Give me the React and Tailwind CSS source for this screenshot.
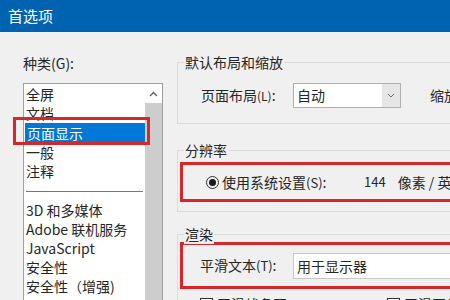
import React from "react";

const items = ["全屏", "文档", "页面显示", "一般", "注释"];
const moreItems = ["3D 和多媒体", "Adobe 联机服务", "JavaScript", "安全性", "安全性（增强)"];

// group box with the label sitting on the top border
const Group = ({ label, className, children }) => (
  <div className={`relative border border-[#dcdcdc] ${className}`}>
    <span className="absolute -top-[11px] left-[6px] bg-[#f0f0f0] px-[1px] leading-[20px] text-[14px]">
      {label}
    </span>
    {children}
  </div>
);

export default function App() {
  return (
    <div
      className="relative w-[450px] h-[300px] overflow-hidden bg-[#f0f0f0] text-[#262626]"
      style={{ fontFamily: '"Noto Sans CJK SC", "Noto Sans", sans-serif' }}
    >
      <div className="h-[32px] bg-[#0063b1] text-white text-[15px] pl-[8px] flex items-center">
        首选项
      </div>

      <div className="flex">
        {/* categories */}
        <div className="ml-[23px] w-[140px] shrink-0">
          <div className="mt-[21px] leading-[20px] text-[14px]">种类(G):</div>
          <div className="mt-[10px] h-[240px] bg-white border border-[#a0a0a0] flex">
            <div className="flex-1 pt-[1px] text-[14px]">
              {items.map((t, i) => (
                <div
                  key={t}
                  className={`h-[19px] leading-[19px] pl-[2px] ${
                    i == 2 ? "bg-[#0078d7] text-white ml-[1px] h-[20px] leading-[20px]" : ""
                  }`}
                >
                  {t}
                </div>
              ))}
              <div className="h-[20px] flex items-center px-[2px]">
                <div className="h-px w-full bg-[#6a7a8a]" />
              </div>
              {moreItems.map((t) => (
                <div key={t} className="h-[19px] leading-[19px] pl-[2px]">
                  {t}
                </div>
              ))}
            </div>
            <div className="w-[17px] flex flex-col">
              <div className="h-[19px] flex items-center justify-center">
                <svg width="9" height="6" viewBox="0 0 9 6">
                  <path d="M1 5 L4.5 1.5 L8 5" fill="none" stroke="#606060" strokeWidth="1.3" />
                </svg>
              </div>
              <div className="flex-1 bg-[#cdcdcd]" />
            </div>
          </div>
        </div>

        {/* settings */}
        <div className="ml-[14px] flex-1 min-w-0 pt-[30px] text-[14px]">
          <Group label="默认布局和缩放" className="h-[62px] mr-[-40px]">
            <div className="flex items-center mt-[20px] ml-[23px]">
              <span className="w-[92px]">
                页面布局<span className="text-[12px]">(L)</span>:
              </span>
              <div className="w-[108px] h-[25px] bg-white border border-[#b0b0b0] flex">
                <span className="flex-1 pl-[3px] leading-[23px]">自动</span>
                <div className="w-[18px] bg-[#e6e6e6] flex items-center justify-center">
                  <svg width="8" height="5" viewBox="0 0 8 5">
                    <path d="M1 1 L4 4 L7 1" fill="none" stroke="#707070" strokeWidth="1" />
                  </svg>
                </div>
              </div>
              <span className="ml-[29px]">缩放</span>
            </div>
          </Group>

          <Group label="分辨率" className="h-[62px] mt-[26px] mr-[-40px]">
            <div className="mt-[11px] ml-[2px] h-[40px] border-[3px] border-[#d8262b] flex items-center">
              <div className="ml-[23px] w-[13px] h-[13px] rounded-full border border-[#333] flex items-center justify-center">
                <div className="w-[7px] h-[7px] rounded-full bg-[#1b1b1b]" />
              </div>
              <span className="ml-[3px] w-[142px]">
                使用系统设置<span className="text-[13px]">(S)</span>:
              </span>
              <span className="text-[13px]">144</span>
              <span className="ml-[12px] whitespace-nowrap">像素 / 英寸</span>
            </div>
          </Group>

          <Group label="渲染" className="h-[80px] mt-[22px] mr-[-40px]">
            <div className="mt-[7px] ml-[2px] h-[47px] border-[3px] border-[#d8262b] flex items-center">
              <span className="ml-[17px] w-[93px]">
                平滑文本<span className="text-[13px]">(T)</span>:
              </span>
              <div className="flex-1 h-[26px] bg-white border border-[#c8c8c8] pl-[3px] leading-[24px]">
                用于显示器
              </div>
            </div>
            <div className="flex items-center mt-[5px] ml-[22px] whitespace-nowrap">
              <div className="w-[13px] h-[13px] border border-[#333] bg-white" />
              <span className="ml-[4px] w-[170px]">平滑线条图</span>
              <div className="w-[13px] h-[13px] border border-[#333] bg-white" />
              <span className="ml-[4px]">平滑图像</span>
            </div>
          </Group>
        </div>
      </div>

      {/* highlight around selected category */}
      <div className="absolute left-[13px] top-[117px] w-[137px] h-[28px] border-[3px] border-[#d8262b]" />
    </div>
  );
}
